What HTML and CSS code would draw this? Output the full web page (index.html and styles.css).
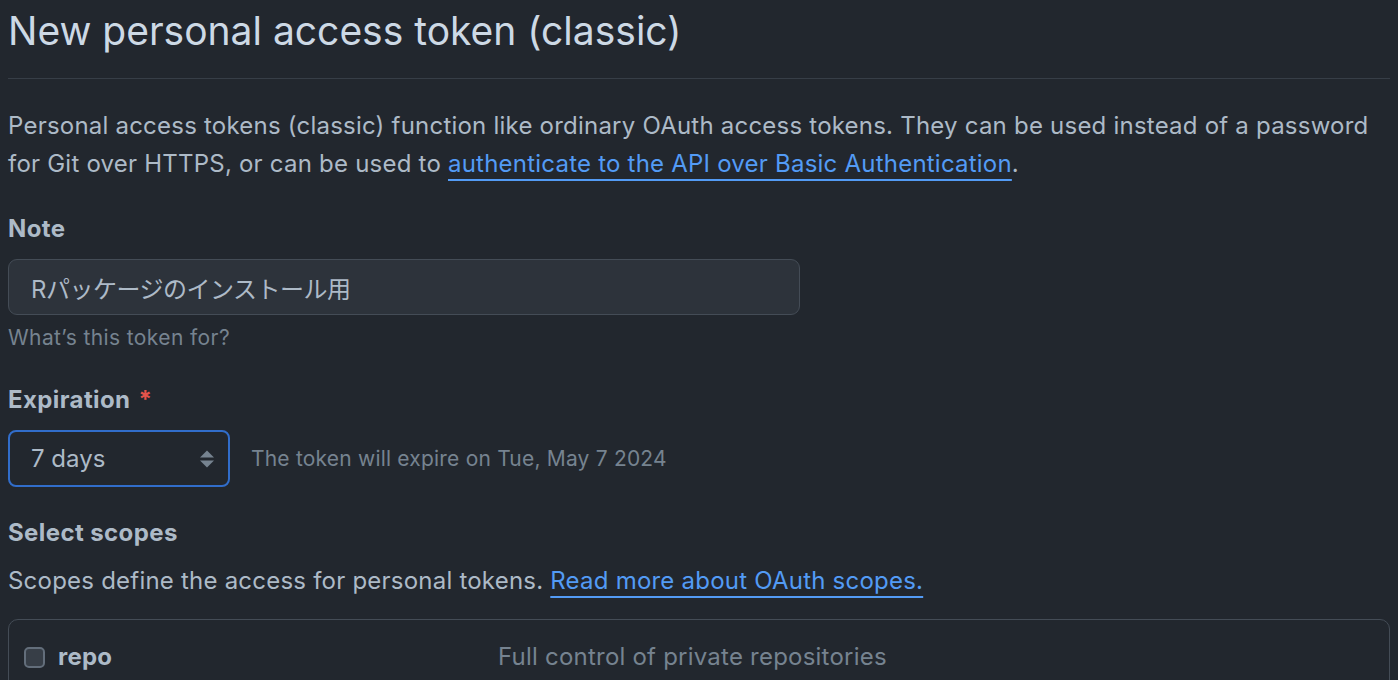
FILE: index.html
```html
<!DOCTYPE html>
<html lang="ja">
<head>
<meta charset="utf-8">
<title>New personal access token (classic)</title>
<link rel="stylesheet" href="styles.css">
</head>
<body>
<div class="page">
  <div class="subhead">
    <h1 class="subhead-title">New personal access token (classic)</h1>
  </div>
  <p class="intro">Personal access tokens (classic) function like ordinary OAuth access tokens. They can be used instead of a password for Git over HTTPS, or can be used to <a href="#" class="link">authenticate to the API over Basic Authentication</a>.</p>

  <div class="field field-note">
    <label class="label">Note</label>
    <div class="input">Rパッケージのインストール用</div>
    <p class="note">What’s this token for?</p>
  </div>

  <div class="field field-exp">
    <label class="label">Expiration <span class="req">*</span></label>
    <div class="exp-row">
      <div class="select">
        <span>7 days</span>
        <svg class="arrows" width="16" height="20" viewBox="0 0 16 20"><path d="M8 1.5 L15 8.5 H1 Z" fill="#768390"/><path d="M8 18.5 L15 11.5 H1 Z" fill="#768390"/></svg>
      </div>
      <span class="exp-note">The token will expire on Tue, May 7 2024</span>
    </div>
  </div>

  <div class="field field-scopes">
    <label class="label">Select scopes</label>
    <p class="scopes-desc">Scopes define the access for personal tokens. <a href="#" class="link">Read more about OAuth scopes.</a></p>
    <div class="scope-box">
      <div class="scope-row">
        <div class="scope-name"><span class="checkbox"></span><span class="scope-label">repo</span></div>
        <div class="scope-desc">Full control of private repositories</div>
      </div>
    </div>
  </div>
</div>
</body>
</html>
```
FILE: styles.css
```css
html, body {
  margin: 0;
  padding: 0;
  background: #22272e;
}
body {
  font-family: Inter, "Liberation Sans", "Noto Sans CJK JP", sans-serif;
  color: #adbac7;
  font-size: 24px;
  letter-spacing: 0.22px;
  overflow: hidden;
}
.page {
  padding: 0 8px;
}
.subhead {
  border-bottom: 1px solid #373e47;
  padding-top: 4px;
  padding-bottom: 20px;
}
.subhead-title {
  margin: 0;
  font-weight: 400;
  font-size: 39px;
  line-height: 54px;
  letter-spacing: 0;
  color: #cdd9e5;
}
.intro {
  margin: 28px 0 0;
  line-height: 38px;
  color: #adbac7;
}
.link {
  color: #539bf5;
  text-decoration: underline;
  text-underline-offset: 7px;
  text-decoration-thickness: 2px;
}
.label {
  display: block;
  font-weight: 700;
  font-size: 24px;
  line-height: 30px;
  letter-spacing: 0.4px;
  color: #adbac7;
}
.req {
  color: #e5534b;
  margin-left: 2px;
}
.field-note {
  margin-top: 31px;
}
.input {
  margin-top: 15px;
  width: 792px;
  height: 56px;
  box-sizing: border-box;
  background: #2d333b;
  border: 1px solid #444c56;
  border-radius: 9px;
  padding: 0 22px;
  display: flex;
  align-items: center;
  font-size: 24px;
  letter-spacing: -0.5px;
  color: #adbac7;
}
.note {
  margin: 8px 0 0;
  font-size: 21px;
  line-height: 30px;
  letter-spacing: 0.4px;
  color: #768390;
}
.field-exp {
  margin-top: 32px;
}
.exp-row {
  margin-top: 15px;
  display: flex;
  align-items: center;
  gap: 21px;
}
.select {
  width: 222px;
  height: 57px;
  box-sizing: border-box;
  border: 2px solid #316dca;
  border-radius: 8px;
  background: #22272e;
  display: flex;
  align-items: center;
  justify-content: space-between;
  padding: 0 13px 0 21px;
  font-size: 24px;
  letter-spacing: 0;
  color: #adbac7;
}
.exp-note {
  font-size: 21px;
  letter-spacing: 0.2px;
  color: #768390;
}
.field-scopes {
  margin-top: 31px;
}
.scopes-desc {
  margin: 16px 0 0;
  line-height: 34px;
}
.scope-box {
  margin-top: 21px;
  border: 1px solid #444c56;
  border-radius: 10px;
  height: 120px;
}
.scope-row {
  display: flex;
  align-items: center;
  padding-top: 22px;
  padding-left: 15px;
  line-height: 30px;
}
.scope-name {
  width: 474px;
  display: flex;
  align-items: center;
  gap: 13px;
}
.checkbox {
  width: 21px;
  height: 21px;
  box-sizing: border-box;
  border: 2px solid #636e7b;
  border-radius: 5px;
  background: #373e47;
}
.scope-label {
  font-weight: 700;
  color: #adbac7;
}
.scope-desc {
  color: #768390;
}
```
